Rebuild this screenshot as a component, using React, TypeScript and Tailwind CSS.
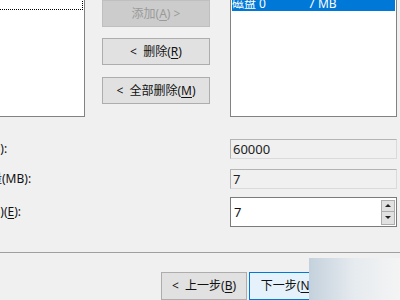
import { ReactNode } from 'react'

const font = "font-['Noto_Sans','Noto_Sans_CJK_SC',sans-serif]"

function Key({ children }: { children: ReactNode }) {
  return <span className="underline underline-offset-2">{children}</span>
}

function SideButton({ children, disabled, className = '' }: { children: ReactNode; disabled?: boolean; className?: string }) {
  return (
    <div
      className={`h-[27px] w-[108px] flex items-center justify-center border text-[12px] leading-none ${
        disabled ? 'bg-[#cccccc] border-[#bfbfbf] text-[#9a9a9a]' : 'bg-[#e1e1e1] border-[#adadad] text-[#111]'
      } ${className}`}
    >
      {children}
    </div>
  )
}

function ReadField({ label, value, className = '' }: { label: string; value: string; className?: string }) {
  return (
    <div className={`flex items-center ${className}`}>
      <div className="w-[230px] flex items-center">
        <span className="ml-[-82px] whitespace-nowrap text-[12px] leading-none text-[#111]">{label}</span>
      </div>
      <div className="w-[167px] h-[20px] flex items-center pl-[2px] bg-[#f0f0f0] border border-[#b4b4b4] border-r-[#dadada] border-b-[#dadada] text-[13px] leading-none text-[#222]">
        {value}
      </div>
    </div>
  )
}

export default function App() {
  return (
    <div className={`relative w-[400px] h-[300px] overflow-hidden bg-[#f0f0f0] ${font}`}>
      {/* lists and move buttons */}
      <div className="flex h-[117px]">
        <div className="ml-[-20px] mt-[-6px] w-[105px] h-[123px] bg-white border border-[#828282] px-[1px]">
          <div className="mt-[1px] h-[14px] w-[101px] border border-dotted border-black" />
        </div>

        <div className="ml-[17px] flex flex-col">
          <SideButton disabled>
            添加(<Key>A</Key>) &gt;
          </SideButton>
          <SideButton className="mt-[11px]">
            &lt;&nbsp; 删除(<Key>R</Key>)
          </SideButton>
          <SideButton className="mt-[12px]">
            &lt;&nbsp; 全部删除(<Key>M</Key>)
          </SideButton>
        </div>

        <div className="ml-[20px] mt-[-6px] w-[167px] h-[123px] bg-white border border-[#828282] px-[1px]">
          <div className="mt-[1px] h-[15px] bg-[#0078d7] text-white text-[12px] leading-none flex items-center">
            <span className="w-[76px] whitespace-nowrap">磁盘 0</span>
            <span>7 MB</span>
          </div>
        </div>
      </div>

      {/* size fields */}
      <ReadField className="mt-[22px]" label="卷大小总数(MB):" value="60000" />
      <ReadField className="mt-[10px]" label="最大可用空间量(MB):" value="7" />

      <div className="flex items-center mt-[8px]">
        <div className="w-[230px] flex items-center">
          <span className="ml-[-82px] whitespace-nowrap text-[12px] leading-none text-[#111]">
            选择空间量(MB)(<Key>E</Key>):
          </span>
        </div>
        <div className="w-[167px] h-[30px] flex items-center bg-white border border-[#7a7a7a]">
          <span className="flex-1 pl-[3px] text-[13px] leading-none text-[#111]">7</span>
          <div className="mr-[1px] flex flex-col">
            <div className="w-[14px] h-[12px] bg-[#e1e1e1] border border-[#adadad] flex items-center justify-center">
              <div className="w-0 h-0 border-l-[3px] border-r-[3px] border-b-[3px] border-l-transparent border-r-transparent border-b-[#222]" />
            </div>
            <div className="w-[14px] h-[13px] bg-[#e1e1e1] border border-t-0 border-[#adadad] flex items-center justify-center">
              <div className="w-0 h-0 border-l-[3px] border-r-[3px] border-t-[3px] border-l-transparent border-r-transparent border-t-[#222]" />
            </div>
          </div>
        </div>
      </div>

      {/* separator and wizard buttons */}
      <div className="mt-[25px] h-px bg-[#a0a0a0]" />

      <div className="mt-[19px] flex pl-[161px] gap-[2px]">
        <div className="w-[86px] h-[28px] flex items-center justify-center bg-[#e1e1e1] border border-[#adadad] text-[12px] leading-none text-[#111]">
          &lt;&nbsp; 上一步(<Key>B</Key>)
        </div>
        <div className="w-[86px] h-[28px] flex items-center justify-center bg-[#e5f1fb] border border-[#0078d7] text-[12px] leading-none text-[#111]">
          下一步(<Key>N</Key>) &gt;
        </div>
      </div>

      {/* watermark fade over the corner */}
      <div className="absolute left-[309px] top-[258px] right-0 bottom-0 bg-linear-to-r from-[#c4d1dc] via-[#e6ebef] to-[#f4f4f4]" />
    </div>
  )
}
